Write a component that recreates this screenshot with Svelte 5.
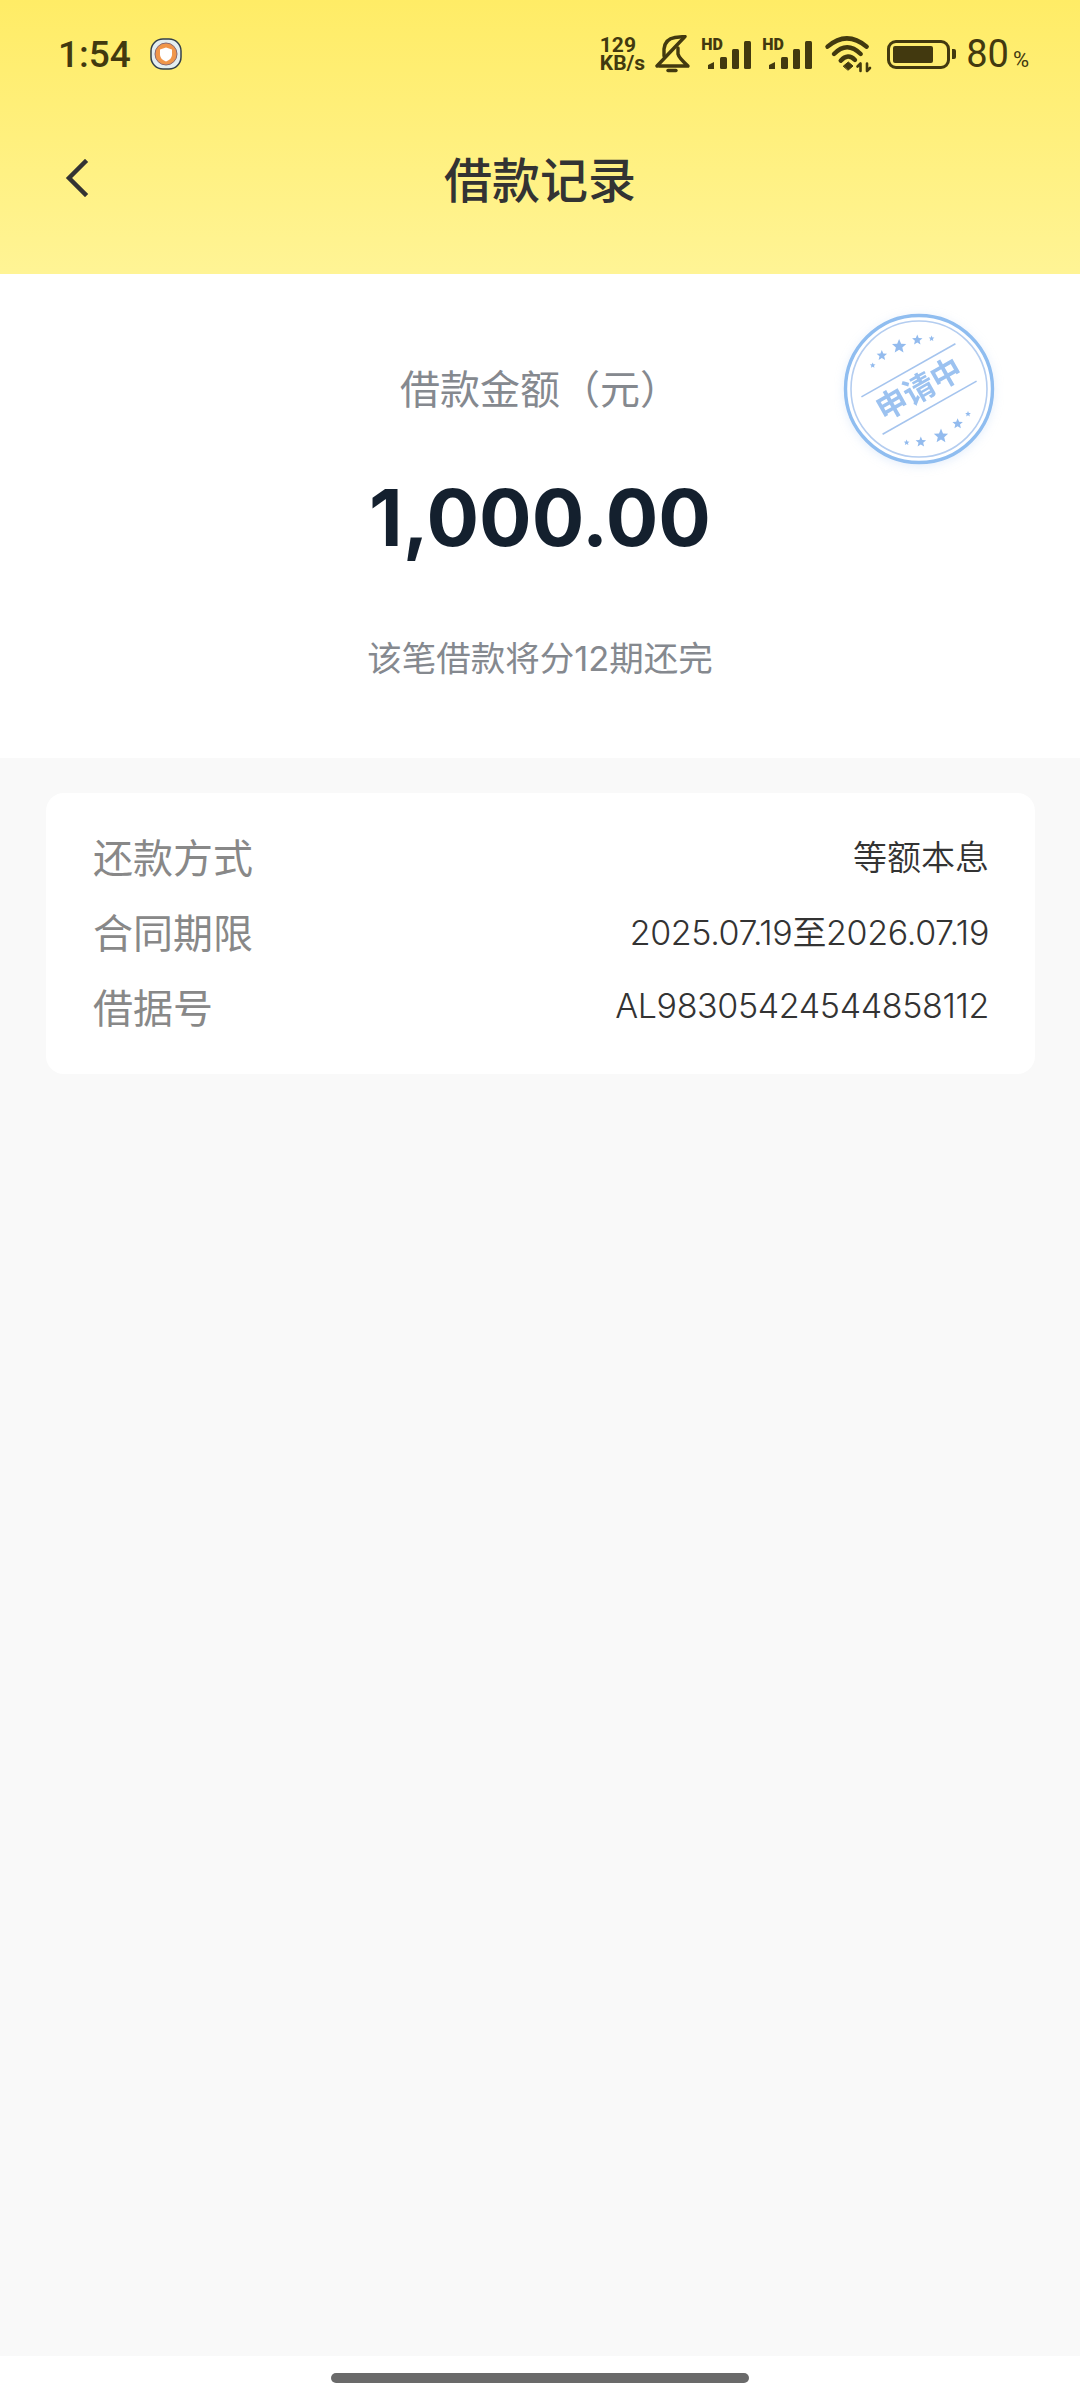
<script>
  const rows = [
    { label: "还款方式", value: "等额本息", num: false },
    { label: "合同期限", value: "2025.07.19至2026.07.19", num: true },
    { label: "借据号", value: "AL98305424544858112", num: true },
  ];
  const bars = [
    { x: 12, h: 12 },
    { x: 24, h: 20 },
    { x: 36, h: 28 },
  ];

  // stamp stars sit on two arcs round the centre
  const cx = 85;
  const cy = 85;
  const starAt = (deg, dist, r) => {
    const a = (deg * Math.PI) / 180;
    const px = cx + dist * Math.cos(a);
    const py = cy + dist * Math.sin(a);
    let pts = [];
    for (let i = 0; i < 10; i++) {
      const rr = i % 2 ? r * 0.45 : r;
      const t = -Math.PI / 2 + (i * Math.PI) / 5;
      pts.push((px + rr * Math.cos(t)).toFixed(1) + "," + (py + rr * Math.sin(t)).toFixed(1));
    }
    return pts.join(" ");
  };
  const stars = [
    starAt(207, 52, 3),
    starAt(222, 50, 5.5),
    starAt(245, 47, 7.5),
    starAt(268, 49, 5.5),
    starAt(284, 52, 3),
    starAt(27, 55, 3),
    starAt(42, 52, 5.5),
    starAt(65, 52, 7.5),
    starAt(88, 53, 5.5),
    starAt(103, 55, 3),
  ];
</script>

<div class="page">
  <header class="top">
    <div class="status">
      <div class="left">
        <span class="time">1:54</span>
        <svg class="notif" width="32" height="32" viewBox="0 0 32 32">
          <rect x="1" y="1" width="30" height="30" rx="12" fill="#e4eef0" stroke="#33404a" stroke-width="1.5" />
          <circle cx="16" cy="16" r="11" fill="#f0964a" />
          <circle cx="16" cy="16" r="11" fill="none" stroke="#8a6a70" stroke-width="1" />
          <path d="M10 11.5 L16 9.5 L22 11.5 V17 Q21.5 21.5 16 23.5 Q10.500 21.5 10 17 Z" fill="#fff" />
        </svg>
      </div>
      <div class="right">
        <span class="speed">129<br />KB/s</span>
        <svg class="bell" width="36" height="38" viewBox="0 0 36 38" fill="none" stroke="#42390f" stroke-width="3.4" stroke-linecap="round" stroke-linejoin="round">
          <path d="M30 1.5 L2 31" />
          <path d="M9 21 V14 Q10 4 20 2.5 L29 1.5" />
          <path d="M23 13 V19 Q24 23 33 31 H4" />
          <path d="M13 35.5 H21" />
        </svg>
        {#each [0, 1] as sim}
          <div class="signal">
            <span class="hd">HD</span>
            <svg width="44" height="28" viewBox="0 0 44 28">
              <path d="M0 24 L6 21 V28 H0 Z" fill="#42390f" />
              {#each bars as b}
                <rect x={b.x} y={28 - b.h} width="7" height={b.h} rx="1.5" fill="#42390f" />
              {/each}
            </svg>
          </div>
        {/each}
        <svg class="wifi" width="46" height="35" viewBox="0 0 46 35" fill="none" stroke="#42390f" stroke-width="4.4" stroke-linecap="round">
          <path d="M1.5 9.7 Q20.7 -7 40.7 9.7" />
          <path d="M8 17 Q21 3.6 34.7 17" />
          <path d="M14.7 23.7 Q22 15.7 29 23" />
          <path d="M17.5 29 L22.3 25 L27 29 L22.3 33 Z" fill="#42390f" stroke-width="1" />
          <path d="M34.5 34 V27 M31.5 29.5 L34.5 26.5 M41 26.5 V34 M41 34 L44 31" stroke-width="2.6" />
        </svg>
        <div class="battery">
          <div class="shell"><div class="fill" style="width: 78%"></div></div>
          <div class="cap"></div>
        </div>
        <span class="pct">80<small>%</small></span>
      </div>
    </div>
    <nav class="bar">
      <svg class="back" width="24" height="38" viewBox="0 0 24 38" fill="none" stroke="#333" stroke-width="4.5" stroke-linecap="square">
        <path d="M20 3 L4 19 L20 35" />
      </svg>
      <h1>借款记录</h1>
    </nav>
  </header>

  <section class="summary">
    <p class="label">借款金额（元）</p>
    <p class="amount">1,000.00</p>
    <p class="note">该笔借款将分12期还完</p>
    <svg class="stamp" width="170" height="170" viewBox="0 0 170 170">
      <circle cx="85" cy="85" r="73.5" fill="#fff" stroke="#8fbdf0" stroke-width="3.4" />
      <circle cx="85" cy="85" r="68" fill="none" stroke="#b4cdf0" stroke-width="1.6" />
      {#each stars as s}
        <polygon points={s} fill="#93bbee" />
      {/each}
      <g transform="rotate(-29.5 85 85)">
        <line x1="31" y1="63.5" x2="139" y2="63.5" stroke="#a5c4ee" stroke-width="1.6" />
        <line x1="31" y1="106.5" x2="139" y2="106.5" stroke="#a5c4ee" stroke-width="1.6" />
        <text x="85" y="96" text-anchor="middle" class="stamp-text">申请中</text>
      </g>
    </svg>
  </section>

  <main class="body">
    <div class="card">
      {#each rows as row}
        <div class="row">
          <span class="key">{row.label}</span>
          <span class="val" class:num={row.num}>{row.value}</span>
        </div>
      {/each}
    </div>
  </main>

  <footer class="navbar"><div class="pill"></div></footer>
</div>

<style>
  :global(body) {
    margin: 0;
  }

  .page {
    width: 1080px;
    height: 2400px;
    display: flex;
    flex-direction: column;
    background: #f9f9f9;
    font-family: Inter, "Noto Sans CJK SC", sans-serif;
  }

  .top {
    height: 274px;
    box-sizing: border-box;
    background: linear-gradient(180deg, #ffec66 0%, #fff495 100%);
  }

  .status {
    height: 108px;
    display: flex;
    justify-content: space-between;
    align-items: center;
    padding: 0 51px 0 58px;
    color: #42390f;
  }

  .left,
  .right {
    display: flex;
    align-items: center;
  }

  .time {
    font-family: Roboto, sans-serif;
    font-size: 37px;
    font-weight: 500;
    width: 92px;
  }

  .right {
    gap: 10px;
  }

  .speed {
    font-family: Roboto, sans-serif;
    font-size: 21px;
    line-height: 18px;
    font-weight: 700;
    text-align: left;
  }

  .signal {
    position: relative;
    width: 51px;
    height: 29px;
    display: flex;
    justify-content: flex-end;
    align-items: flex-end;
  }

  .hd {
    position: absolute;
    left: 0;
    top: -3px;
    font-family: Roboto, sans-serif;
    font-size: 16px;
    font-weight: 900;
    line-height: 16px;
  }

  .wifi {
    margin-left: 3px;
    margin-right: 5px;
    overflow: visible;
  }

  .battery {
    display: flex;
    align-items: center;
    gap: 2px;
  }

  .shell {
    width: 63px;
    height: 29px;
    box-sizing: border-box;
    border: 3.5px solid #42390f;
    border-radius: 9px;
    padding: 3px;
  }

  .fill {
    height: 100%;
    background: #42390f;
    border-radius: 2px;
  }

  .cap {
    width: 4px;
    height: 10px;
    background: #42390f;
    border-radius: 0 2px 2px 0;
  }

  .pct {
    font-family: Roboto, sans-serif;
    font-size: 38px;
    font-weight: 400;
  }

  .pct small {
    font-size: 22px;
    margin-left: 4px;
  }

  .bar {
    position: relative;
    height: 138px;
    display: flex;
    align-items: center;
    justify-content: center;
  }

  .back {
    position: absolute;
    left: 65px;
    top: 51px;
  }

  h1 {
    margin: 0;
    font-size: 48px;
    font-weight: 500;
    color: #333;
  }

  .summary {
    position: relative;
    height: 484px;
    display: flex;
    flex-direction: column;
    align-items: center;
    background: #fff;
  }

  .summary p {
    margin: 0;
  }

  .label {
    margin-top: 89px !important;
    font-size: 40px;
    line-height: 54px;
    color: #85898f;
  }

  .amount {
    margin-top: 51px !important;
    font-size: 78px;
    line-height: 100px;
    font-weight: 700;
    color: #14202e;
  }

  .note {
    margin-top: 66px !important;
    font-size: 34.5px;
    line-height: 50px;
    color: #85898f;
  }

  .stamp {
    position: absolute;
    left: 834px;
    top: 30px;
    filter: drop-shadow(0 2px 5px rgba(147, 187, 238, 0.25)) blur(0.6px);
  }

  .stamp-text {
    font-size: 31px;
    font-weight: 700;
    fill: #9cc2f0;
  }

  .body {
    flex: 1;
    padding: 35px 45px 0 46px;
  }

  .card {
    background: #fff;
    border-radius: 18px;
    padding: 25px 46px 31px 47px;
  }

  .row {
    display: flex;
    justify-content: space-between;
    align-items: center;
    height: 75px;
  }

  .key {
    font-size: 40px;
    color: #888;
  }

  .val {
    font-size: 34px;
    font-weight: 350;
    color: #333;
  }

  .val.num {
    letter-spacing: -0.35px;
  }

  .navbar {
    height: 44px;
    background: #fff;
    display: flex;
    justify-content: center;
    padding-top: 17px;
    box-sizing: border-box;
  }

  .pill {
    width: 418px;
    height: 10px;
    border-radius: 5px;
    background: #6a6a6a;
  }
</style>
